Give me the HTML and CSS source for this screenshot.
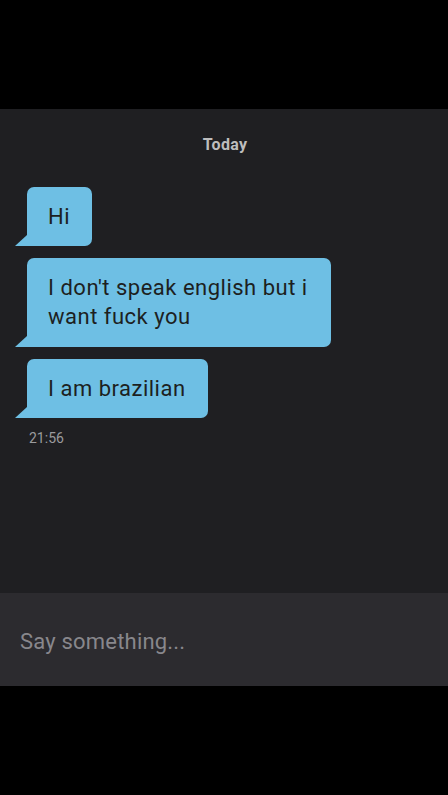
FILE: index.html
```html
<!DOCTYPE html>
<html>
<head>
<meta charset="utf-8">
<title>Chat</title>
<link rel="stylesheet" href="styles.css">
</head>
<body>
<div class="screen">
   <div class="topbar"></div>

   <div class="chat">
      <div class="day">Today</div>
      <div class="msgs">
         <div class="bubble">Hi</div>
         <div class="bubble wide">I don't speak english but i<br>want fuck you</div>
         <div class="bubble">I am brazilian</div>
      </div>
      <div class="time">21:56</div>
   </div>

   <div class="composer">
      <span class="placeholder">Say something...</span>
   </div>

   <div class="bottombar"></div>
</div>
</body>
</html>
```

FILE: styles.css
```css
/* chat screen */
   html, body  {margin: 0; padding: 0; background: #000}
   body        {font-family: Roboto, "DejaVu Sans", sans-serif}
   .screen     {width: 448px; height: 795px; display: flex; flex-direction: column}

   .topbar     {height: 109px; background: #000}
   .bottombar  {flex: 1; background: #000}

   .chat       {height: 484px; background: #1f1f22; box-sizing: border-box;
                padding: 26px 0 0 27px}
   .day        {text-align: center; color: #bdbdbd; font-weight: bold; font-size: 16px;
                letter-spacing: 0.3px; margin-left: -27px; line-height: 20px; padding-left: 2px}

   .msgs       {display: flex; flex-direction: column; align-items: flex-start;
                gap: 12px; margin-top: 32px}
   .bubble     {position: relative; background: #6ebfe4; color: #1d1f22;
                font-size: 22px; line-height: 29px; letter-spacing: 0.5px;
                padding: 15px 22px 15px 21px; border-radius: 7px 7px 7px 0}
   .bubble::before {content: ""; position: absolute; left: -12px; bottom: 0;
                width: 12px; height: 11px; background: #6ebfe4;
                clip-path: polygon(100% 0, 100% 100%, 0 100%)}
   .bubble.wide {width: 261px; padding-bottom: 16px}

   .time       {color: #9a9a9d; font-size: 14px; margin: 12px 0 0 2px}

   .composer   {height: 93px; background: #2c2b2f; display: flex; align-items: center;
                padding-left: 20px; padding-top: 3px; box-sizing: border-box}
   .placeholder {color: #88878c; font-size: 22px; letter-spacing: 0.2px}
```
